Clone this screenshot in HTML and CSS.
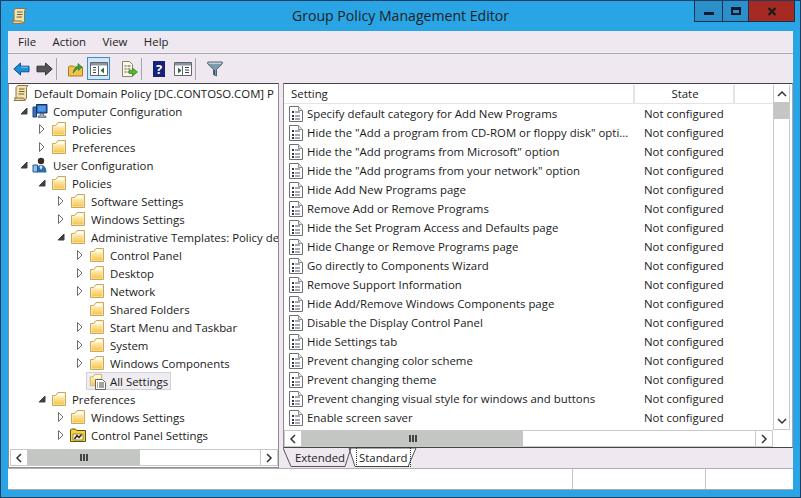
FILE: index.html
```html
<!DOCTYPE html>
<html lang="en">
<head>
<meta charset="utf-8">
<title>Group Policy Management Editor</title>
<link rel="stylesheet" href="styles.css">
</head>
<body>
<svg class="defs" width="0" height="0" aria-hidden="true">
  <defs>
    <linearGradient id="fold" x1="0" y1="0" x2="0" y2="1">
      <stop offset="0" stop-color="#ffeaa8"/>
      <stop offset="1" stop-color="#f5c451"/>
    </linearGradient>
    <symbol id="folder" viewBox="0 0 16 16">
      <path d="M1.500 14.500V4.500h3l2.500-3h7.500v13z" fill="#fbf0c8" stroke="#c9a85c"/>
      <path d="M2.500 6h11v7.500h-11z" fill="url(#fold)"/>
      <path d="M7.500 2.500h5.500v2.500H6z" fill="#fffdf2"/>
    </symbol>
    <symbol id="doc" viewBox="0 0 14 16">
      <path d="M.5.500h9l4 4v11H.5z" fill="#fff" stroke="#6f6f6f"/>
      <path d="M9.500.500v4h4" fill="#e6e6e6" stroke="#8f8f8f"/>
      <path d="M3 5h2v2H3zM3 9h2v2H3zM3 12h2v2H3z" fill="#303a4a"/>
      <path d="M6 6h5M6 10h5M6 13h5" stroke="#4a5564"/>
    </symbol>
    <symbol id="open" viewBox="0 0 10 10">
      <path d="M2.500.500l4.500 4.500-4.500 4.500z" fill="#fff" stroke="#6e6e6e"/>
    </symbol>
    <symbol id="shut" viewBox="0 0 10 10">
      <path d="M8 2v6H2z" fill="#404040" stroke="#404040"/>
    </symbol>
    <symbol id="scroll" viewBox="0 0 16 18">
      <path d="M4.500 1.500h10.500l-1.500 2v10.500l-1.500 2.500H1l2-2.500V3.500z" fill="#f3e2ae" stroke="#8a7744"/>
      <path d="M1 14h9.500l1.500 2.500" fill="#e0c98a" stroke="#8a7744"/>
      <path d="M6 5h5.500M6 7.500h5.500M5.500 10h5.500" stroke="#6d6140"/>
    </symbol>
    <symbol id="pane" viewBox="0 0 18 16">
      <path d="M.5 1.500h17v13H.5z" fill="#fff" stroke="#5f6670"/>
      <path d="M1 2h16v2.500H1z" fill="#8c949e"/>
      <path d="M8.500 5v9" stroke="#5f6670"/>
    </symbol>
  </defs>
</svg>

<div class="window">
  <header class="titlebar">
    <svg class="title-icon" width="16" height="18"><use href="#scroll"/></svg>
    <h1 class="title">Group Policy Management Editor</h1>
    <div class="caption">
      <div class="cap cap-min"><span class="glyph-min"></span></div>
      <div class="cap cap-max"><span class="glyph-max"></span></div>
      <div class="cap cap-close">
        <svg width="10" height="9" viewBox="0 0 10 9"><path d="M1.500 1l7 7M8.500 1l-7 7" stroke="#1a1a20" stroke-width="2.200"/></svg>
      </div>
    </div>
  </header>

  <div class="client">
    <nav class="menubar">
      <span>File</span><span>Action</span><span>View</span><span>Help</span>
    </nav>

    <div class="toolbar">
      <svg class="tool t-back" width="17" height="14" viewBox="0 0 17 14"><path d="M.8 7L7.500 1v3.200h8.500v5.600H7.500V13z" fill="#1c8fdb" stroke="#0f4f8f"/><path d="M8 5.200h7" stroke="#7cc8f5"/></svg>
      <svg class="tool t-fwd" width="17" height="14" viewBox="0 0 17 14"><path d="M16.200 7L9.500 1v3.200H1v5.600h8.500V13z" fill="#555" stroke="#333"/></svg>
      <i class="sep s1"></i>
      <svg class="tool t-up" width="15" height="16" viewBox="0 0 15 16"><path d="M.5 15V6l1-1h4l1 1h8v9z" fill="#f2c150" stroke="#a97f22"/><path d="M5 12C6 8 7.500 6 10 5V2.500L14 6l-3.500 3.500V7C8.500 8 7 10 5 12z" fill="#3aa63a" stroke="#1e6e1e" stroke-width=".6"/></svg>
      <div class="tool-on">
        <svg width="18" height="16"><use href="#pane"/><path d="M3 6.500h3M3 9h3M3 11.500h3" stroke="#39414c"/><path d="M14 6.500v6L10.500 9.500z" fill="#2c6e3a"/></svg>
      </div>
      <svg class="tool t-export" width="17" height="18" viewBox="0 0 17 18"><path d="M1.500 1.500h7l3 3v12h-10z" fill="#fff8e0" stroke="#8a8570"/><path d="M3.500 6h2M3.500 9h2M3.500 12h2M6.500 6h3M6.500 9h3M6.500 12h2" stroke="#4a5060"/><path d="M8 10.500h3.500V8l5 4-5 4v-2.500H8z" fill="#59b53a" stroke="#2e7d1e" stroke-width=".7"/></svg>
      <i class="sep s2"></i>
      <div class="tool t-help"><span>?</span></div>
      <svg class="tool t-pane2" width="18" height="16"><use href="#pane"/><path d="M11 6.500h4M11 9h4M11 11.500h4" stroke="#39414c"/><path d="M4 6.500v6L7.500 9.500z" fill="#2c6e3a"/></svg>
      <i class="sep s3"></i>
      <svg class="tool t-filter" width="16" height="16" viewBox="0 0 16 16"><path d="M.8 1h14.400v2L9.500 8.500V15l-3-1.500v-5L.8 3z" fill="#7d9bad" stroke="#4a6273"/><path d="M1.500 2.200h13" stroke="#dbe7ee"/><path d="M7.500 9v5" stroke="#3c5263"/></svg>
    </div>

    <div class="panes">
      <section class="tree-pane">
        <ul class="tree">
          <li class="node l0"><svg class="ico" width="16" height="18"><use href="#scroll"/></svg><span>Default Domain Policy [DC.CONTOSO.COM] P</span></li>
          <li class="node l1"><svg class="tw" width="10" height="10"><use href="#shut"/></svg>
            <svg class="ico" width="16" height="16" viewBox="0 0 16 16"><path d="M1 4h3.500v10H1z" fill="#2f75c0" stroke="#24406f"/><path d="M4.500 1.500h10.500v8.500H4.500z" fill="#2a6ec4" stroke="#1b2d55"/><path d="M6 3h7.500v5.500H6z" fill="#4a9ae8"/><path d="M8 10.500h3.500V13H14v1.500H6V13h2z" fill="#a3adba" stroke="#434c5c" stroke-width=".6"/></svg>
            <span>Computer Configuration</span></li>
          <li class="node l2"><svg class="tw" width="10" height="10"><use href="#open"/></svg><svg class="ico" width="16" height="16"><use href="#folder"/></svg><span>Policies</span></li>
          <li class="node l2"><svg class="tw" width="10" height="10"><use href="#open"/></svg><svg class="ico" width="16" height="16"><use href="#folder"/></svg><span>Preferences</span></li>
          <li class="node l1"><svg class="tw" width="10" height="10"><use href="#shut"/></svg>
            <svg class="ico" width="16" height="16" viewBox="0 0 16 16"><circle cx="9" cy="4" r="3.200" fill="#3a2a22"/><path d="M4.500 15.500c0-5 1.500-7.500 4.500-7.500s5.500 2.500 5.500 7.500z" fill="#2c6cab"/><path d="M1 8h4.500v7H1z" fill="#8cc0e8" stroke="#2a5a8c"/><path d="M9 8l-1.500 2L9 13l1.500-3z" fill="#dbe7f2"/></svg>
            <span>User Configuration</span></li>
          <li class="node l2"><svg class="tw" width="10" height="10"><use href="#shut"/></svg><svg class="ico" width="16" height="16"><use href="#folder"/></svg><span>Policies</span></li>
          <li class="node l3"><svg class="tw" width="10" height="10"><use href="#open"/></svg><svg class="ico" width="16" height="16"><use href="#folder"/></svg><span>Software Settings</span></li>
          <li class="node l3"><svg class="tw" width="10" height="10"><use href="#open"/></svg><svg class="ico" width="16" height="16"><use href="#folder"/></svg><span>Windows Settings</span></li>
          <li class="node l3"><svg class="tw" width="10" height="10"><use href="#shut"/></svg><svg class="ico" width="16" height="16"><use href="#folder"/></svg><span>Administrative Templates: Policy de</span></li>
          <li class="node l4"><svg class="tw" width="10" height="10"><use href="#open"/></svg><svg class="ico" width="16" height="16"><use href="#folder"/></svg><span>Control Panel</span></li>
          <li class="node l4"><svg class="tw" width="10" height="10"><use href="#open"/></svg><svg class="ico" width="16" height="16"><use href="#folder"/></svg><span>Desktop</span></li>
          <li class="node l4"><svg class="tw" width="10" height="10"><use href="#open"/></svg><svg class="ico" width="16" height="16"><use href="#folder"/></svg><span>Network</span></li>
          <li class="node l4"><i class="tw"></i><svg class="ico" width="16" height="16"><use href="#folder"/></svg><span>Shared Folders</span></li>
          <li class="node l4"><svg class="tw" width="10" height="10"><use href="#open"/></svg><svg class="ico" width="16" height="16"><use href="#folder"/></svg><span>Start Menu and Taskbar</span></li>
          <li class="node l4"><svg class="tw" width="10" height="10"><use href="#open"/></svg><svg class="ico" width="16" height="16"><use href="#folder"/></svg><span>System</span></li>
          <li class="node l4"><svg class="tw" width="10" height="10"><use href="#open"/></svg><svg class="ico" width="16" height="16"><use href="#folder"/></svg><span>Windows Components</span></li>
          <li class="node l4"><i class="tw"></i><div class="selected"><svg class="ico" width="18" height="17" viewBox="0 0 18 17"><use href="#folder" width="14" height="14"/><path d="M6.500 6.500h7l3 3v7h-10z" fill="#fff" stroke="#666"/><path d="M8 10h1M8 12h1M8 14h1M10 10h5M10 12h5M10 14h5" stroke="#444"/></svg><span>All Settings</span></div></li>
          <li class="node l2"><svg class="tw" width="10" height="10"><use href="#shut"/></svg><svg class="ico" width="16" height="16"><use href="#folder"/></svg><span>Preferences</span></li>
          <li class="node l3"><svg class="tw" width="10" height="10"><use href="#open"/></svg><svg class="ico" width="16" height="16"><use href="#folder"/></svg><span>Windows Settings</span></li>
          <li class="node l3"><svg class="tw" width="10" height="10"><use href="#open"/></svg>
            <svg class="ico" width="16" height="16" viewBox="0 0 16 16"><path d="M.5 14.500V3l1-1h4l1 1.500h9v11z" fill="#f5d33c" stroke="#5f5114"/><path d="M3 7h10v6H3z" fill="#f8f2d8" stroke="#5f5114" stroke-width=".6"/><path d="M4.500 12l2.500-3.500 2 2 2.500-3" stroke="#1d1d1d" stroke-width="1.400" fill="none"/></svg>
            <span>Control Panel Settings</span></li>
        </ul>
        <div class="hscroll">
          <div class="sb-btn"><svg width="8" height="10" viewBox="0 0 8 10"><path d="M6 1L2 5l4 4" fill="none" stroke="#333" stroke-width="1.500"/></svg></div>
          <div class="thumb thumb-tree"><i class="grip"></i></div>
          <div class="track"></div>
          <div class="sb-btn"><svg width="8" height="10" viewBox="0 0 8 10"><path d="M2 1l4 4-4 4" fill="none" stroke="#333" stroke-width="1.500"/></svg></div>
        </div>
      </section>

      <section class="list-area">
        <div class="list-pane">
          <div class="list-main">
            <div class="list-col">
              <div class="list-head">
                <div class="h-setting">Setting</div>
                <div class="h-state">State</div>
                <div class="h-rest"></div>
              </div>
              <ul class="rows">
                <li class="row"><svg class="doc" width="14" height="16"><use href="#doc"/></svg><span class="name">Specify default category for Add New Programs</span><span class="state">Not configured</span></li>
                <li class="row"><svg class="doc" width="14" height="16"><use href="#doc"/></svg><span class="name">Hide the "Add a program from CD-ROM or floppy disk" opti...</span><span class="state">Not configured</span></li>
                <li class="row"><svg class="doc" width="14" height="16"><use href="#doc"/></svg><span class="name">Hide the "Add programs from Microsoft" option</span><span class="state">Not configured</span></li>
                <li class="row"><svg class="doc" width="14" height="16"><use href="#doc"/></svg><span class="name">Hide the "Add programs from your network" option</span><span class="state">Not configured</span></li>
                <li class="row"><svg class="doc" width="14" height="16"><use href="#doc"/></svg><span class="name">Hide Add New Programs page</span><span class="state">Not configured</span></li>
                <li class="row"><svg class="doc" width="14" height="16"><use href="#doc"/></svg><span class="name">Remove Add or Remove Programs</span><span class="state">Not configured</span></li>
                <li class="row"><svg class="doc" width="14" height="16"><use href="#doc"/></svg><span class="name">Hide the Set Program Access and Defaults page</span><span class="state">Not configured</span></li>
                <li class="row"><svg class="doc" width="14" height="16"><use href="#doc"/></svg><span class="name">Hide Change or Remove Programs page</span><span class="state">Not configured</span></li>
                <li class="row"><svg class="doc" width="14" height="16"><use href="#doc"/></svg><span class="name">Go directly to Components Wizard</span><span class="state">Not configured</span></li>
                <li class="row"><svg class="doc" width="14" height="16"><use href="#doc"/></svg><span class="name">Remove Support Information</span><span class="state">Not configured</span></li>
                <li class="row"><svg class="doc" width="14" height="16"><use href="#doc"/></svg><span class="name">Hide Add/Remove Windows Components page</span><span class="state">Not configured</span></li>
                <li class="row"><svg class="doc" width="14" height="16"><use href="#doc"/></svg><span class="name">Disable the Display Control Panel</span><span class="state">Not configured</span></li>
                <li class="row"><svg class="doc" width="14" height="16"><use href="#doc"/></svg><span class="name">Hide Settings tab</span><span class="state">Not configured</span></li>
                <li class="row"><svg class="doc" width="14" height="16"><use href="#doc"/></svg><span class="name">Prevent changing color scheme</span><span class="state">Not configured</span></li>
                <li class="row"><svg class="doc" width="14" height="16"><use href="#doc"/></svg><span class="name">Prevent changing theme</span><span class="state">Not configured</span></li>
                <li class="row"><svg class="doc" width="14" height="16"><use href="#doc"/></svg><span class="name">Prevent changing visual style for windows and buttons</span><span class="state">Not configured</span></li>
                <li class="row"><svg class="doc" width="14" height="16"><use href="#doc"/></svg><span class="name">Enable screen saver</span><span class="state">Not configured</span></li>
              </ul>
            </div>
            <div class="vscroll">
              <div class="sb-btn-v"><svg width="10" height="8" viewBox="0 0 10 8"><path d="M1 6l4-4 4 4" fill="none" stroke="#333" stroke-width="1.500"/></svg></div>
              <div class="thumb thumb-v"></div>
              <div class="track"></div>
              <div class="sb-btn-v"><svg width="10" height="8" viewBox="0 0 10 8"><path d="M1 2l4 4 4-4" fill="none" stroke="#333" stroke-width="1.500"/></svg></div>
            </div>
          </div>
          <div class="hscroll hscroll-list">
            <div class="sb-btn"><svg width="8" height="10" viewBox="0 0 8 10"><path d="M6 1L2 5l4 4" fill="none" stroke="#333" stroke-width="1.500"/></svg></div>
            <div class="thumb thumb-list"><i class="grip"></i></div>
            <div class="track"></div>
            <div class="sb-btn"><svg width="8" height="10" viewBox="0 0 8 10"><path d="M2 1l4 4-4 4" fill="none" stroke="#333" stroke-width="1.500"/></svg></div>
          </div>
        </div>
        <div class="tabs">
          <svg class="tab-lines" width="140" height="20" viewBox="0 0 140 20"><path d="M66 0l6 18.500h53L133 0z" fill="#fff" stroke="#555"/><path d="M0 0l8 18.500h54L68 0" fill="none" stroke="#555"/></svg>
          <span class="tab tab-ext">Extended</span>
          <span class="tab tab-std">Standard</span>
        </div>
      </section>
    </div>

    <footer class="status">
      <div class="st st1"></div>
      <div class="st st2"></div>
      <div class="st st3"></div>
    </footer>
  </div>
</div>
</body>
</html>
```
FILE: styles.css
```css
* { box-sizing: border-box; }
html, body { margin: 0; padding: 0; }
body {
  width: 801px;
  height: 498px;
  overflow: hidden;
  font-family: "Open Sans", "Noto Sans", sans-serif;
  font-size: 11.4px;
  color: #1a1a1a;
  background: #29a5e6;
}
ul { list-style: none; margin: 0; padding: 0; }
.defs { position: absolute; }

.window {
  width: 801px;
  height: 498px;
  display: flex;
  flex-direction: column;
  background: #29a5e6;
  border: 1px solid #1e3f63;
  padding: 0 7px 7px;
}

.titlebar {
  height: 30px;
  flex: none;
  display: flex;
  align-items: flex-start;
  position: relative;
}
.title-icon { margin: 6px 0 0 3px; }
.title {
  position: absolute;
  left: 0;
  right: 0;
  top: 5px;
  margin: 0;
  text-align: center;
  font-size: 14.1px;
  line-height: 20px;
  font-weight: 400;
  color: #1d1d1d;
}
.caption {
  margin-left: auto;
  margin-right: -2px;
  display: flex;
  height: 21px;
  border: 1px solid #16304e;
  border-top: 0;
  position: relative;
}
.cap { display: flex; align-items: center; justify-content: center; height: 20px; }
.cap-min { width: 28px; background: #2b8fc9; border-right: 1px solid #16304e; }
.cap-max { width: 26px; background: #2b8fc9; border-right: 1px solid #16304e; }
.cap-close { width: 45px; background: #a62a22; }
.glyph-min { width: 10px; height: 3px; background: #0d1a33; margin-top: 5px; }
.glyph-max { width: 10px; height: 8px; border: 2px solid #0d1a33; border-top-width: 3px; }

.client {
  flex: 1;
  display: flex;
  flex-direction: column;
  min-height: 0;
  background: #efe8f1;
}

.menubar {
  height: 22px;
  flex: none;
  display: flex;
  align-items: center;
  padding: 0 0 0 10px;
  gap: 16.500px;
  background: #efe8f1;
  color: #222;
  border-bottom: 1px solid #f6f3f7;
}
.toolbar {
  height: 30px;
  flex: none;
  display: flex;
  align-items: center;
  padding: 0 0 0 5px;
  border-top: 1px solid #a8a8ac;
  background: #efe8f1;
}
.tool { flex: none; }
.t-fwd { margin-left: 6px; }
.sep { width: 1px; height: 22px; background: #a6a6aa; flex: none; }
.s1 { margin-left: 3px; }
.t-up { margin-left: 11px; }
.tool-on {
  width: 23px;
  height: 23px;
  margin-left: 4px;
  display: flex;
  align-items: center;
  justify-content: center;
  border: 1px solid #3f8fd0;
  background: #d3e6f5;
}
.t-export { margin-left: 11px; }
.s2 { margin-left: 3px; }
.t-help {
  width: 12px;
  height: 16px;
  margin-left: 11px;
  background: #16227a;
  color: #fff;
  font-weight: 700;
  font-size: 13px;
  line-height: 16px;
  text-align: center;
}
.t-pane2 { margin-left: 9px; }
.s3 { margin-left: 3px; }
.t-filter { margin-left: 11px; }

.panes {
  flex: 1;
  min-height: 0;
  display: flex;
  gap: 4px;
}

.tree-pane {
  width: 271px;
  flex: none;
  display: flex;
  flex-direction: column;
  background: #fff;
  border: 1px solid #8d8d90;
  border-top-color: #45454a;
  padding: 0 0 1px 1px;
}
.tree { flex: 1; min-height: 0; overflow: hidden; }
.node {
  height: 18px;
  display: flex;
  align-items: center;
  white-space: nowrap;
}
.l0 { padding-left: 3px; }
.l1 { padding-left: 9px; }
.l2 { padding-left: 27px; }
.l3 { padding-left: 46px; }
.l4 { padding-left: 65px; }
.tw { width: 10px; height: 10px; flex: none; margin-right: 4px; display: block; }
.l1 .tw { margin-right: 3px; }
.ico { flex: none; margin-right: 5px; }
.selected {
  display: flex;
  align-items: center;
  height: 18px;
  margin-left: -3px;
  padding: 0 2px 0 2px;
  background: #efedf1;
  border: 1px solid #d2d0d4;
}
.selected .ico { margin-right: 3px; }

.hscroll {
  height: 17px;
  flex: none;
  display: flex;
  border: 1px solid #c9c9c9;
  background: #fff;
}
.sb-btn {
  width: 17px;
  flex: none;
  display: flex;
  align-items: center;
  justify-content: center;
  background: #fff;
  border-right: 1px solid #c9c9c9;
}
.sb-btn:last-child { border-right: 0; border-left: 1px solid #c9c9c9; }
.track { flex: 1; background: #fff; }
.thumb { background: #c3c6c2; display: flex; align-items: center; justify-content: center; }
.thumb-tree { width: 112px; }
.thumb-list { width: 221px; }
.grip { width: 8px; height: 7px; background: repeating-linear-gradient(90deg, #444 0 2px, transparent 2px 3px); }

.list-area {
  flex: 1;
  min-width: 0;
  display: flex;
  flex-direction: column;
}
.list-pane {
  flex: 1;
  min-height: 0;
  display: flex;
  flex-direction: column;
  background: #fff;
  border: 1px solid #8d8d90;
  border-top-color: #45454a;
  border-bottom-color: #45454a;
  border-right-color: #a8a8ac;
  padding: 1px 2px 0 0;
}
.list-main { flex: 1; min-height: 0; display: flex; }
.list-col { flex: 1; min-width: 0; display: flex; flex-direction: column; }
.list-head {
  height: 19px;
  flex: none;
  display: flex;
  align-items: center;
  border-bottom: 1px solid #e4e4e4;
  color: #222;
}
.h-setting { width: 351px; padding-left: 7px; border-right: 2px solid #e4e4e4; height: 18px; line-height: 18px; }
.h-state { width: 100px; padding-left: 2px; text-align: center; border-right: 2px solid #e4e4e4; height: 18px; line-height: 18px; }
.h-rest { flex: 1; }
.rows { flex: 1; min-height: 0; overflow: hidden; }
.row {
  height: 19px;
  display: flex;
  align-items: center;
  padding-left: 5px;
  white-space: nowrap;
}
.doc { flex: none; margin-right: 4px; }
.name { width: 337px; flex: none; overflow: hidden; }
.state { flex: none; }

.vscroll {
  width: 17px;
  flex: none;
  display: flex;
  flex-direction: column;
  border: 1px solid #c9c9c9;
  border-top: 0;
  border-bottom: 1px solid #c9c9c9;
}
.sb-btn-v {
  height: 17px;
  flex: none;
  display: flex;
  align-items: center;
  justify-content: center;
  background: #fff;
}
.thumb-v { height: 17px; flex: none; }

.hscroll-list { margin-right: 17px; }

.tabs {
  height: 20px;
  flex: none;
  display: flex;
  position: relative;
  padding-left: 12px;
  background: #efe8f1;
}
.tab-lines { position: absolute; left: 0; top: 0; }
.tab { position: relative; line-height: 20px; color: #222; }
.tab-ext { width: 60px; margin-right: 2px; }
.tab-std { outline: 1px dotted #333; outline-offset: 0; padding: 0 2px; height: 18px; line-height: 19px; }

.status {
  height: 22px;
  flex: none;
  display: flex;
  background: #fff;
  border-top: 1px solid #b0b0b0;
  border-bottom: 1px solid #a8a8ac;
}
.st { height: 100%; }
.st1 { width: 565px; border-right: 1px solid #c4c4c4; }
.st2 { width: 133px; border-right: 1px solid #c4c4c4; }
.st3 { flex: 1; }
```
